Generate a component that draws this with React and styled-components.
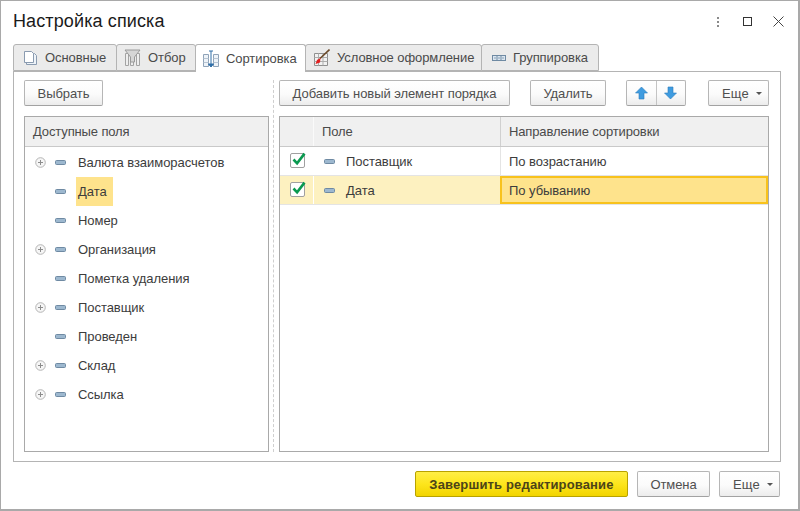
import React from 'react'
import styled, { createGlobalStyle } from 'styled-components'

const Global = createGlobalStyle`
  html, body {
    margin: 0;
    padding: 0;
    background: #fff;
  }
  * {
    box-sizing: border-box;
  }
`

const Window = styled.div`
  width: 800px;
  height: 511px;
  display: flex;
  flex-direction: column;
  background: #fff;
  border: solid #a9a9a9;
  border-width: 1px 2px 2px 1px;
  font-family: 'Liberation Sans', Arial, sans-serif;
  font-size: 13px;
  color: #4a4a4a;
`

const TitleBar = styled.div`
  height: 43px;
  flex: none;
  display: flex;
  align-items: center;
  padding: 0 5px 2px 12px;
`

const Title = styled.div`
  flex: 1;
  font-size: 18px;
  letter-spacing: 0.12px;
  color: #1a1a1a;
`

const WindowButton = styled.div`
  width: 30px;
  height: 20px;
  display: flex;
  align-items: center;
  justify-content: center;
`

const Tabs = styled.div`
  display: flex;
  height: 27px;
  flex: none;
  margin-left: 12px;
  position: relative;
  z-index: 1;
`

const Tab = styled.div`
  width: ${p => p.$width}px;
  height: ${p => (p.$active ? 28 : 27)}px;
  display: flex;
  align-items: center;
  gap: 7px;
  padding-left: ${p => p.$pad || 9}px;
  margin-right: -1px;
  background: ${p => (p.$active ? '#fff' : '#ebebeb')};
  border: 1px solid #b4b4b4;
  border-bottom: ${p => (p.$active ? 'none' : '1px solid #b4b4b4')};
  border-radius: 3px 3px 0 0;
  position: relative;
  z-index: ${p => (p.$active ? 2 : 0)};
  letter-spacing: -0.08px;
  color: #4a4a4a;
`

const TabPanel = styled.div`
  flex: none;
  width: 768px;
  height: 391px;
  margin-left: 12px;
  border: 1px solid #b4b4b4;
  display: flex;
  padding: 8px 10px 9px 10px;
`

const LeftColumn = styled.div`
  width: 245px;
  flex: none;
  display: flex;
  flex-direction: column;
  gap: 10px;
`

const Splitter = styled.div`
  width: 1px;
  flex: none;
  margin: 0 5px 0 4px;
  border-left: 1px dashed #cfcfcf;
`

const RightColumn = styled.div`
  width: 490px;
  flex: none;
  display: flex;
  flex-direction: column;
  gap: 10px;
`

const Toolbar = styled.div`
  height: 26px;
  flex: none;
  display: flex;
`

const Button = styled.div`
  width: ${p => p.$width}px;
  height: 26px;
  flex: none;
  margin-left: ${p => p.$gap || 0}px;
  display: flex;
  align-items: center;
  justify-content: center;
  border: 1px solid #b6b6b6;
  border-bottom-color: #a2a2a2;
  border-radius: 2px;
  background: linear-gradient(#ffffff 0%, #fbfbfb 55%, #ececec 100%);
  letter-spacing: -0.07px;
  color: #4f4f4f;
  white-space: nowrap;
`

const MoreButton = styled(Button)`
  justify-content: flex-start;
  padding-left: 13px;
  gap: 7px;
  letter-spacing: 0.2px;
`

const PrimaryButton = styled(Button)`
  border-color: #b8a200;
  background: linear-gradient(#ffee46 0%, #fde51c 50%, #f2d400 100%);
  font-weight: bold;
  color: #4c4418;
  letter-spacing: 0.15px;
`

const ArrowGroup = styled.div`
  width: 60px;
  height: 26px;
  flex: none;
  margin-left: ${p => p.$gap}px;
  display: flex;
  border: 1px solid #b6b6b6;
  border-bottom-color: #a2a2a2;
  border-radius: 2px;
  background: linear-gradient(#ffffff 0%, #fbfbfb 55%, #ececec 100%);
`

const ArrowCell = styled.div`
  flex: 1;
  display: flex;
  align-items: center;
  justify-content: center;
  & + & {
    border-left: 1px solid #c4c4c4;
  }
`

const Caret = styled.span`
  width: 0;
  height: 0;
  border-left: 3px solid transparent;
  border-right: 3px solid transparent;
  border-top: 3px solid #555;
  margin-top: 1px;
`

const Panel = styled.div`
  flex: 1;
  min-height: 0;
  border: 1px solid #a9a9a9;
  display: flex;
  flex-direction: column;
`

const ListHeader = styled.div`
  height: 30px;
  flex: none;
  display: flex;
  align-items: center;
  padding-left: 8px;
  background: #f0f0f0;
  border-bottom: 1px solid #c9c9c9;
  letter-spacing: -0.13px;
`

const TreeList = styled.div`
  padding-top: 1px;
`

const TreeRow = styled.div`
  height: 29px;
  display: flex;
  align-items: center;
`

const Expander = styled.div`
  width: 11px;
  height: 11px;
  flex: none;
  margin-left: 10px;
  margin-right: 9px;
  display: flex;
`

const TreeLabel = styled.div`
  height: 29px;
  display: flex;
  align-items: center;
  margin-left: 10px;
  padding: 0 6px 0 2px;
  letter-spacing: -0.05px;
  color: #3c3c3c;
  background: ${p => (p.$selected ? '#fee38c' : 'transparent')};
`

const GridHeader = styled.div`
  height: 30px;
  flex: none;
  display: grid;
  grid-template-columns: 33px 187px 1fr;
  background: #f0f0f0;
  border-bottom: 1px solid #c9c9c9;
  letter-spacing: -0.13px;
`

const HeaderCell = styled.div`
  display: flex;
  align-items: center;
  padding-left: 8px;
  border-left: 1px solid ${p => p.$divider || 'transparent'};
`

const GridRow = styled.div`
  height: 29px;
  flex: none;
  display: grid;
  grid-template-columns: 33px 187px 1fr;
  border-bottom: 1px solid #e4e4e4;
  background: ${p => (p.$current ? '#fdf1c0' : '#fff')};
`

const CheckCell = styled.div`
  display: flex;
  align-items: center;
  justify-content: center;
  padding: 0 0 4px 3px;
`

const FieldCell = styled.div`
  display: flex;
  align-items: center;
  border-left: 1px solid #fff;
  padding-left: 10px;
  gap: 11px;
  letter-spacing: -0.05px;
  color: #3c3c3c;
`

const ValueCell = styled.div`
  display: flex;
  align-items: center;
  padding-left: 8px;
  letter-spacing: -0.05px;
  color: #3c3c3c;
  border-left: 1px solid ${p => (p.$active ? 'transparent' : '#e4e4e4')};
  ${p => p.$active && `
    background: #fee38c;
    border: 2px solid #f8c21c;
    padding-left: 7px;
  `}
`

const Footer = styled.div`
  flex: 1;
  display: flex;
  justify-content: flex-end;
  align-items: flex-start;
  padding: 9px 18px 0 0;
`

const FieldIcon = () => (
  <svg width="11" height="5" viewBox="0 0 11 5">
    <rect x="0.5" y="0.5" width="10" height="4" rx="1" fill="#9db8cf" stroke="#6f8aa3" />
  </svg>
)

const PlusIcon = () => (
  <svg width="11" height="11" viewBox="0 0 11 11">
    <circle cx="5.5" cy="5.5" r="4.8" fill="#f6f6f6" stroke="#b5b5b5" />
    <path d="M3 5.5h5M5.5 3v5" stroke="#8d8d8d" />
  </svg>
)

const CheckBox = () => (
  <svg width="17" height="17" viewBox="0 0 17 17">
    <rect x="0.5" y="2.5" width="14" height="14" rx="1.5" fill="#fff" stroke="#a0a0a0" />
    <path d="M3.5 8.5l3.6 3.8L14.5 2.6" fill="none" stroke="#0a9a50" strokeWidth="2.6" />
  </svg>
)

const ArrowIcon = ({ down }) => (
  <svg width="13" height="14" viewBox="0 0 13 14">
    <path
      d={down ? 'M4 1h5v6h3.5L6.5 13 .5 7H4z' : 'M4 13h5V7h3.5L6.5 1 .5 7H4z'}
      fill="#3f9ce0"
      stroke="#2b7cbc"
      strokeWidth="0.6"
    />
  </svg>
)

const MainTabIcon = () => (
  <svg width="15" height="16" viewBox="0 0 15 16">
    <path d="M3.5 3.5h8l2 2v9h-10z" fill="#eef3f8" stroke="#8a9bb0" />
    <path d="M1.5 1.5h7l2 2v9h-9z" fill="#fff" stroke="#8a9bb0" />
  </svg>
)

const FilterTabIcon = () => (
  <svg width="17" height="17" viewBox="0 0 17 17">
    <path d="M1.5 4.5h3v12h-3zM12.5 4.5h3v12h-3z" fill="#eeeeee" stroke="#a3a3a3" />
    <path d="M6.5 9.5h3v7h-3z" fill="#eeeeee" stroke="#a3a3a3" />
    <path d="M1 1h15l-5.5 7v5H6.500V8z" fill="#d6d6d6" stroke="#9a9a9a" />
  </svg>
)

const SortTabIcon = () => (
  <svg width="16" height="18" viewBox="0 0 16 18">
    <path d="M.5 4.500h5v12h-5zM10.500 4.500h5v12h-5z" fill="#eef3f8" stroke="#8fa3b8" />
    <path d="M.5 8.500h5M.5 12.500h5M10.500 8.500h5M10.500 12.500h5" stroke="#b7c4d2" />
    <path d="M8 1v14" stroke="#2f6fa8" />
    <path d="M5.500 14l2.500 3 2.500-3zM6 1h4" fill="#2f6fa8" stroke="#2f6fa8" />
  </svg>
)

const ConditionalTabIcon = () => (
  <svg width="16" height="17" viewBox="0 0 16 17">
    <path d="M.5 4.500h13v12H.5z" fill="#f2f2f2" stroke="#8f8f8f" />
    <path d="M4.500 4.500v12M9 4.500v12M.5 8.500h13M.5 12.500h13" stroke="#adadad" />
    <path d="M15.500.5L6 9.500" stroke="#6b4a2a" strokeWidth="1.6" />
    <path d="M6.500 9l-3.500 2-1.500 4 4.500-1.500z" fill="#e02020" />
  </svg>
)

const GroupTabIcon = () => (
  <svg width="14" height="6" viewBox="0 0 14 6">
    <rect x="0.500" y="0.500" width="13" height="5" fill="#dbe6f0" stroke="#6f8aa3" />
    <path d="M5 .5v5M9 .5v5" stroke="#6f8aa3" />
    <path d="M2 3h2M6 3h2M10 3h2" stroke="#8aa2b8" />
  </svg>
)

const fields = [
  { name: 'Валюта взаиморасчетов', expandable: true },
  { name: 'Дата', selected: true },
  { name: 'Номер' },
  { name: 'Организация', expandable: true },
  { name: 'Пометка удаления' },
  { name: 'Поставщик', expandable: true },
  { name: 'Проведен' },
  { name: 'Склад', expandable: true },
  { name: 'Ссылка', expandable: true },
]

export default function App() {
  return (
    <Window>
      <Global />
      <TitleBar>
        <Title>Настройка списка</Title>
        <WindowButton>
          <svg width="4" height="12" viewBox="0 0 4 12" fill="#8a8a8a">
            <rect x="1" y="1" width="2" height="2" />
            <rect x="1" y="5" width="2" height="2" />
            <rect x="1" y="9" width="2" height="2" />
          </svg>
        </WindowButton>
        <WindowButton>
          <svg width="10" height="10" viewBox="0 0 10 10">
            <rect x="0.500" y="0.500" width="8" height="8" fill="none" stroke="#333" />
          </svg>
        </WindowButton>
        <WindowButton>
          <svg width="11" height="11" viewBox="0 0 11 11">
            <path d="M.5.500l10 10M10.500.500l-10 10" stroke="#444" />
          </svg>
        </WindowButton>
      </TitleBar>

      <Tabs>
        <Tab $width={104}><MainTabIcon />Основные</Tab>
        <Tab $width={80} $pad={7}><FilterTabIcon />Отбор</Tab>
        <Tab $width={111} $pad={7} $active><SortTabIcon />Сортировка</Tab>
        <Tab $width={177} $pad={8}><ConditionalTabIcon />Условное оформление</Tab>
        <Tab $width={118} $pad={10}><GroupTabIcon />Группировка</Tab>
      </Tabs>

      <TabPanel>
        <LeftColumn>
          <Toolbar>
            <Button $width={79}>Выбрать</Button>
          </Toolbar>
          <Panel>
            <ListHeader>Доступные поля</ListHeader>
            <TreeList>
              {fields.map(f => (
                <TreeRow key={f.name}>
                  <Expander>{f.expandable && <PlusIcon />}</Expander>
                  <FieldIcon />
                  <TreeLabel $selected={f.selected}>{f.name}</TreeLabel>
                </TreeRow>
              ))}
            </TreeList>
          </Panel>
        </LeftColumn>

        <Splitter />

        <RightColumn>
          <Toolbar>
            <Button $width={231}>Добавить новый элемент порядка</Button>
            <Button $width={76} $gap={20}>Удалить</Button>
            <ArrowGroup $gap={20}>
              <ArrowCell><ArrowIcon /></ArrowCell>
              <ArrowCell><ArrowIcon down /></ArrowCell>
            </ArrowGroup>
            <MoreButton $width={61} $gap={22}>Еще<Caret /></MoreButton>
          </Toolbar>
          <Panel>
            <GridHeader>
              <HeaderCell />
              <HeaderCell $divider="#fafafa">Поле</HeaderCell>
              <HeaderCell $divider="#d0d0d0">Направление сортировки</HeaderCell>
            </GridHeader>
            <GridRow>
              <CheckCell><CheckBox /></CheckCell>
              <FieldCell><FieldIcon />Поставщик</FieldCell>
              <ValueCell>По возрастанию</ValueCell>
            </GridRow>
            <GridRow $current>
              <CheckCell><CheckBox /></CheckCell>
              <FieldCell><FieldIcon />Дата</FieldCell>
              <ValueCell $active>По убыванию</ValueCell>
            </GridRow>
          </Panel>
        </RightColumn>
      </TabPanel>

      <Footer>
        <PrimaryButton $width={213}>Завершить редактирование</PrimaryButton>
        <Button $width={73} $gap={9}>Отмена</Button>
        <MoreButton $width={61} $gap={9}>Еще<Caret /></MoreButton>
      </Footer>
    </Window>
  )
}
